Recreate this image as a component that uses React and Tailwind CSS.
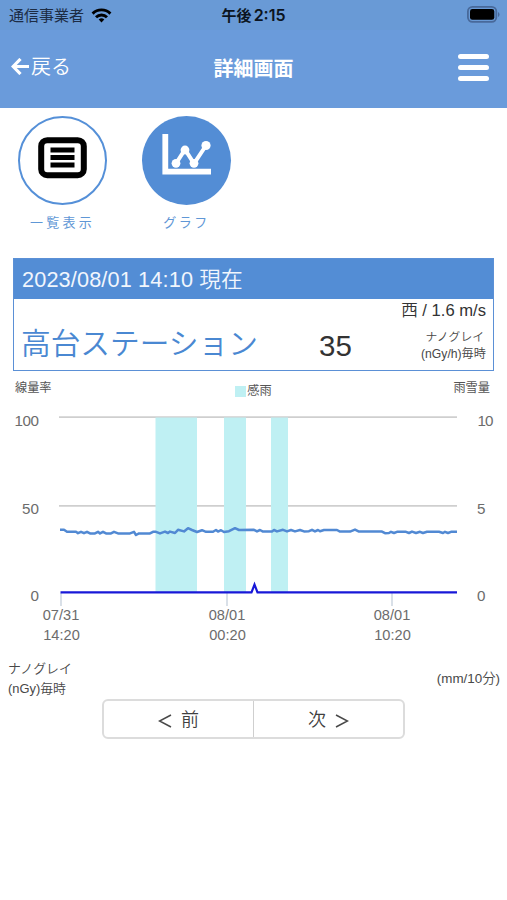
import React from "react";

const JP = "font-['Liberation_Sans','Noto_Sans_CJK_JP',sans-serif]";

const doseLine = [
  [60, 529.8], [64, 529.8], [67, 531.8], [76, 531.8], [78, 533.2], [81, 531.8], [84, 533.2], [87, 531.8],
  [90, 533.4], [95, 533.4], [98, 531.8], [100, 533.4], [103, 531.8], [106, 533.4], [111, 533.4], [114, 531.8],
  [118, 533.4], [130, 533.4], [134, 531.8], [136, 535], [139, 533.4], [150, 533.4], [153, 531.8], [156, 531.8],
  [160, 533.4], [165, 531.6], [168, 533], [170, 531.6], [175, 533], [178, 529.8], [184, 531.4], [188, 528.2],
  [192, 530], [197, 532], [202, 530.2], [206, 531.8], [213, 531.8], [216, 530], [218, 531.6], [221, 530.2],
  [224, 532], [229, 531.2], [235, 528.2], [239, 530], [254, 529.8], [257, 531.4], [260, 530], [263, 531.6],
  [272, 531.4], [274, 530], [277, 531.4], [283, 529.8], [287, 531.4], [291, 530], [295, 531.4], [300, 530],
  [304, 531.4], [309, 531.2], [312, 529.8], [315, 531.4], [318, 530], [320, 531.2], [324, 530], [337, 530],
  [340, 531.6], [350, 531.6], [355, 529.6], [359, 531.6], [382, 531.6], [385, 533.2], [389, 533], [391, 531.8],
  [394, 533], [397, 531.8], [406, 531.8], [409, 533], [412, 531.6], [416, 533], [420, 531.8], [423, 533],
  [427, 531.8], [439, 531.8], [443, 533], [445, 531.8], [448, 533], [451, 531.8], [457, 531.8],
];

const rainBands = [
  { x: 155.5, w: 41.5 },
  { x: 224, w: 22 },
  { x: 271, w: 17 },
];

const ticks = [
  { x: 61, date: "07/31", time: "14:20" },
  { x: 227, date: "08/01", time: "00:20" },
  { x: 392, date: "08/01", time: "10:20" },
];

function StatusBar() {
  return (
    <div className="grid h-[30px] grid-cols-3 items-center bg-[#699ad6] text-black">
      <div className="flex items-center gap-[7px] pl-[9px]">
        <span className="text-[15px] leading-[30px] text-[#1c2c44]">通信事業者</span>
        <svg width="21" height="15" viewBox="0 0 21 15" fill="none" stroke="#000" strokeWidth="2.9">
          <path d="M1.6 5.6a12.6 12.6 0 0 1 17.8 0" />
          <path d="M5 9.2a7.8 7.8 0 0 1 11 0" />
          <path d="M10.5 14.4 7.7 11.5a4 4 0 0 1 5.6 0z" fill="#000" stroke="none" />
        </svg>
      </div>
      <div className="text-center text-[15px] leading-[30px] font-bold text-[#0b1420]">
        午後 <span className="-ml-[2px] font-['Inter',sans-serif] text-[16px] font-semibold">2:15</span>
      </div>
      <div className="flex justify-end pr-[7px] pb-[2px]">
        <svg width="33" height="17" viewBox="0 0 33 17">
          <rect x="0.9" y="0.9" width="28.4" height="15" rx="4.6" fill="none" stroke="#48699a" strokeWidth="1.8" />
          <rect x="3" y="3" width="24.3" height="10.8" rx="2.4" fill="#000" />
          <path d="M31 6v5a2.8 2.8 0 0 0 0-5z" fill="#48699a" />
        </svg>
      </div>
    </div>
  );
}

function NavBar() {
  return (
    <div className="grid h-[78px] grid-cols-3 items-center text-white">
      <div className="flex items-center gap-[2px] pb-[4px] pl-[11px]">
        <svg width="18" height="17" viewBox="0 0 18 17" fill="none" stroke="#fff" strokeWidth="3.2" className="mb-[2px]">
          <path d="M9.5 1 2.2 8.5 9.5 16M2.5 8.5H18" />
        </svg>
        <span className="text-[20px] leading-[30px] font-[350]">戻る</span>
      </div>
      <div className="pb-[1px] text-center text-[20px] leading-[30px] font-bold">詳細画面</div>
      <div className="flex justify-end pr-[18px] pb-[3px]">
        <div className="flex w-[31px] flex-col gap-[6.5px]">
          <div className="h-[4.5px] rounded-full bg-white" />
          <div className="h-[4.5px] rounded-full bg-white" />
          <div className="h-[4.5px] rounded-full bg-white" />
        </div>
      </div>
    </div>
  );
}

function ModeButtons() {
  return (
    <div className="flex gap-[35px] pt-[8px] pl-[18px] text-[#5f97d6]">
      <div className="flex w-[89px] flex-col items-center">
        <div className="flex h-[89px] w-[89px] items-center justify-center rounded-full border-[2.5px] border-[#5590d8]">
          <svg width="50" height="42" viewBox="0 0 50 42" className="mb-[5px]">
            <rect x="3.2" y="3.2" width="42.6" height="35" rx="6" fill="none" stroke="#000" strokeWidth="6" />
            <path d="M12.5 12.9h24M12.5 20.5h24M12.5 28.1h24" stroke="#000" strokeWidth="5" />
          </svg>
        </div>
        <span className="mt-[8px] text-[13px] leading-[20px] tracking-[3.3px]">一覧表示</span>
      </div>
      <div className="flex w-[89px] flex-col items-center">
        <div className="flex h-[89px] w-[89px] items-center justify-center rounded-full bg-[#538dd5]">
          <svg width="50" height="42" viewBox="0 0 50 42" className="mb-[11px]" fill="none" stroke="#fff">
            <path d="M3.3 0v37.7H49" strokeWidth="5.8" />
            <path d="M14 29.5 23 15.5 32 29.5 44 11.5" strokeWidth="4" />
            <g fill="#fff" stroke="none">
              <circle cx="14" cy="29.3" r="4.4" />
              <circle cx="23" cy="16" r="4.4" />
              <circle cx="32" cy="29.3" r="4.4" />
              <circle cx="44" cy="11.5" r="4.6" />
            </g>
          </svg>
        </div>
        <span className="mt-[8px] text-[13px] leading-[20px] tracking-[2.5px]">グラフ</span>
      </div>
    </div>
  );
}

function StationCard() {
  return (
    <div className="mx-[13px] mt-[25px] h-[113px] border-[1.5px] border-[#5b90d6]">
      <div className="h-[40px] bg-[#538dd5] pl-[8px] text-[21.7px] leading-[42px] font-[350] whitespace-nowrap text-[#f1f6fd]">
        <span className="tracking-[0.14px]">2023/08/01 14:10 </span>現在
      </div>
      <div className="flex h-[71px] text-[#333]">
        <div className="w-[296px] pl-[7px] text-[29.7px] leading-[90px] font-[350] whitespace-nowrap text-[#4a88d2]">
          高台ステーション
        </div>
        <div className="w-[60px] pl-[9px] text-[29.5px] leading-[93px]">35</div>
        <div className="flex flex-1 flex-col items-end pr-[7px]">
          <div className="text-[16.6px] leading-[24px] font-[350] whitespace-nowrap">西 / 1.6 m/s</div>
          <div className="mt-[6px] text-right text-[12.2px] leading-[17px] font-[350] whitespace-nowrap text-[#484848]">
            <div className="pr-[2px] text-[11.8px]">ナノグレイ</div>
            <div>(nGy/h)毎時</div>
          </div>
        </div>
      </div>
    </div>
  );
}

function Chart() {
  return (
    <svg width="507" height="247" viewBox="0 402 507 247" className={JP}>
      <path d="M59 417.200H457M59 505.900H457" stroke="#cfcfcf" strokeWidth="1.8" />
      {rainBands.map((b) => (
        <rect key={b.x} x={b.x} y="417.5" width={b.w} height="175" fill="#bff0f3" />
      ))}
      {ticks.map((t) => (
        <path key={t.x} d={`M${t.x} 593v13`} stroke="#c5d0dc" strokeWidth="1.3" />
      ))}
      <polyline points={doseLine.join(" ")} fill="none" stroke="#5189d3" strokeWidth="2.5" strokeLinejoin="round" />
      <path d="M60.500 592.300H251.500L254.500 584.500L257.500 592.300H457" fill="none" stroke="#1818d8" strokeWidth="2.2" />
      <g fill="#6c6c6c" fontSize="15.200">
        <g textAnchor="end">
          <text x="39" y="426.300" textLength="24.500">100</text>
          <text x="39" y="513.800">50</text>
          <text x="39" y="601.300">0</text>
        </g>
        <text x="477.500" y="426.300" textLength="16">10</text>
        <text x="477" y="513.800">5</text>
        <text x="477" y="601.300">0</text>
        <g textAnchor="middle" fontSize="14.600">
          {ticks.map((t) => (
            <g key={t.x}>
              <text x={t.x} y="620">{t.date}</text>
              <text x={t.x + 0.5} y="640.300">{t.time}</text>
            </g>
          ))}
        </g>
      </g>
    </svg>
  );
}

export default function App() {
  return (
    <div className={`h-[900px] w-[507px] overflow-hidden bg-white ${JP}`}>
      <header className="h-[108px] bg-[#6a9bdb]">
        <StatusBar />
        <NavBar />
      </header>
      <ModeButtons />
      <StationCard />
      <div className="flex h-[31px] justify-between px-[15px] text-[12.2px] text-[#555]">
        <span className="w-[60px] pt-[8px] leading-[18px]">線量率</span>
        <span className="flex h-[18px] items-center gap-[1px] pt-[20px]">
          <span className="h-[11px] w-[11px] bg-[#bff0f3]" />
          感雨
        </span>
        <span className="w-[60px] pt-[8px] pr-[2px] text-right leading-[18px]">雨雪量</span>
      </div>
      <Chart />
      <div className="flex h-[49px] justify-between pt-[10px] pr-[7px] pl-[8px] text-[12.9px] font-[350] text-[#484848]">
        <div className="leading-[19.5px]">
          <div>ナノグレイ</div>
          <div>(nGy)毎時</div>
        </div>
        <div className="pt-[10px] text-[13.4px] leading-[19px]">(mm/10分)</div>
      </div>
      <div className="mt-px ml-[102px] flex h-[40px] w-[303px] rounded-[6px] border-2 border-[#dcdcdc] text-[18px] font-[350] text-[#404040]">
        <div className="flex w-[150px] items-center justify-center gap-[9px] border-r border-[#cfcfcf] pt-[3px]">
          <svg width="14" height="14" viewBox="0 0 14 14" fill="none" stroke="#484848" strokeWidth="1.5">
            <path d="M13 1 1.500 7 13 13" />
          </svg>
          <span>前</span>
        </div>
        <div className="flex flex-1 items-center justify-center gap-[9px] pt-[3px]">
          <span>次</span>
          <svg width="14" height="14" viewBox="0 0 14 14" fill="none" stroke="#484848" strokeWidth="1.5">
            <path d="M1 1 12.500 7 1 13" />
          </svg>
        </div>
      </div>
    </div>
  );
}
